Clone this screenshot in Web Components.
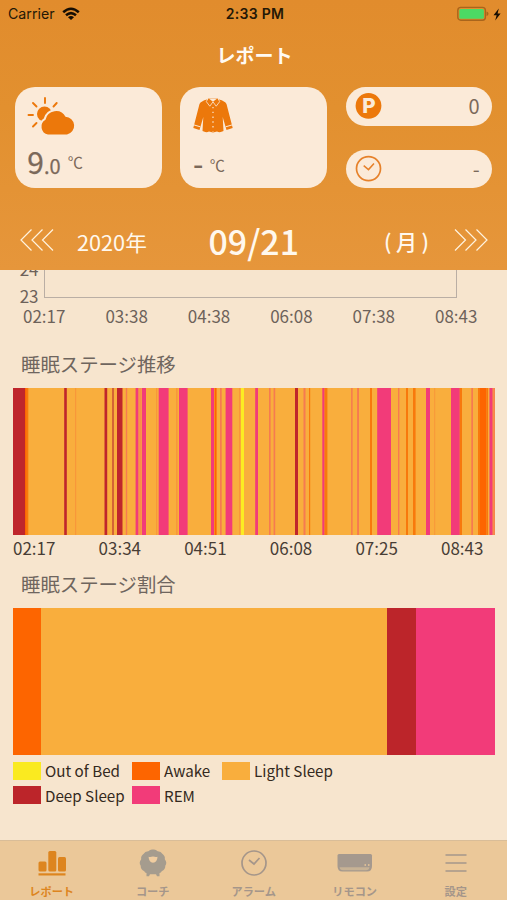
<!DOCTYPE html>
<html lang="ja">
<head>
<meta charset="utf-8">
<title>レポート</title>
<style>
html,body{margin:0;height:100%}
body{font-family:"Noto Sans CJK JP","Noto Sans",sans-serif;background:#f7e5ce;overflow:hidden}
</style>
</head>
<body>
<sleep-app></sleep-app>
<script>
const define = (name, html, after) => customElements.define(name, class extends HTMLElement {
  connectedCallback() {
    if (this.shadowRoot) return;
    const root = this.attachShadow({mode: 'open'});
    const t = document.createElement('template');
    t.innerHTML = html;
    root.append(t.content.cloneNode(true));
    if (after) after(this, root);
  }
});

define('status-bar', `
<style>
:host{display:grid;grid-template-columns:1fr auto 1fr;align-items:center;height:28px;padding:0 6px 0 8px;color:#241806;font:14.2px/28px Inter,sans-serif;box-sizing:border-box}
.l,.r{display:flex;align-items:center;gap:7px}
.r{justify-content:flex-end;gap:4px}
b{font-weight:600;font-size:14px;letter-spacing:.3px;padding-left:1px}
svg{display:block}
</style>
<div class="l"><span>Carrier</span><svg width="18" height="14" viewBox="0 0 18 14" fill="none" stroke="#160e03" stroke-width="2.5"><path d="M1.2 5.2Q9-1.7 16.8 5.2M4 8.3Q9 3.9 14 8.3"/><path d="M9 13L6 10.2Q9 7.8 12 10.2Z" fill="#160e03" stroke="none"/></svg></div>
<b>2:33 PM</b>
<div class="r"><svg width="32" height="16" viewBox="0 0 32 16"><rect x=".8" y="1.4" width="27.6" height="12.8" rx="3" fill="none" stroke="#a9651c" stroke-width="1.4"/><rect x="2.3" y="2.9" width="24.6" height="9.8" rx="1.5" fill="#4cd964"/><path d="M29.5 5.5Q31.5 6 31.5 7.8T29.5 10Z" fill="#a9651c"/></svg><svg width="8" height="13" viewBox="0 0 8 13"><path d="M5.8.5L.5 7.2H3.6L2.2 12.5L7.6 5.6H4.6Z" fill="#160e03"/></svg></div>`);

define('info-card', `
<style>:host{display:flex;flex-direction:column;box-sizing:border-box;border-radius:20px;background:#fbead8;color:#7b695a;padding:9px 12px 0;height:101px}
.v{display:flex;align-items:baseline;height:48px;line-height:48px;margin-top:-1px}</style>
<slot name="icon"></slot><div class="v"><slot></slot></div>`);

define('info-pill', `
<style>:host{display:flex;align-items:center;justify-content:space-between;box-sizing:border-box;height:38.5px;border-radius:20px;background:#fbead8;color:#7b695a;padding:0 12.5px 0 9px;font-size:20px;line-height:38px}
::slotted(svg){display:block}</style>
<slot name="icon"></slot><span><slot></slot></span>`);

define('date-nav', `
<style>
:host{display:grid;grid-template-columns:57px 113px 194px auto 1fr;align-items:center;height:49px;color:#fff8ed;padding:0 19px 0 20px;box-sizing:border-box}
svg{display:block;fill:none;stroke:#fff3df;stroke-width:1.2;margin-bottom:2px}
.y{font-size:21.7px;line-height:49px}
.d{font-size:33.9px;font-weight:500;line-height:50px;padding-left:18.5px}
.w{font-size:21px;font-weight:500;line-height:49px;display:flex;gap:4.5px}
.n{justify-self:end}
</style>
<svg width="34" height="24"><path d="M11.5 1.5L1 12L11.5 22.5M22.5 1.5L12 12L22.5 22.5M33 1.5L22.5 12L33 22.5"/></svg>
<span class="y">2020年</span><span class="d">09/21</span>
<span class="w"><span>(</span><span>月</span><span>)</span></span>
<svg class="n" width="34" height="24"><path d="M1 1.5L11.5 12L1 22.5M11.5 1.5L22 12L11.5 22.5M22.5 1.5L33 12L22.5 22.5"/></svg>`);

define('report-header', `
<style>
:host{display:block;height:270px;flex:none;background:linear-gradient(#e18c2d,#e2902f 40%,#e6963b)}
h1{margin:0;height:59px;font-size:19px;line-height:54px;text-align:center;color:#fffaf2;font-weight:700;padding-left:2px}
.cards{display:grid;grid-template-columns:147px 147px 146.5px;column-gap:18.2px;padding-left:15.3px;height:129px}
.pills{display:flex;flex-direction:column;gap:24px}
.cards svg{display:block}
.big{font-size:30px}.mid{font-size:20px}.u{font-size:15.2px;position:relative;top:-6px;margin-left:7px}
.big,.mid{-webkit-text-stroke:.25px #7b695a}
.cold{font-size:29px;font-weight:500;position:relative;top:1px;left:.5px}.c{top:-3px}
</style>
<status-bar></status-bar>
<h1>レポート</h1>
<div class="cards">
 <info-card><svg slot="icon" width="50" height="42" viewBox="27 95 50 42">
  <circle cx="44.5" cy="113" r="7.5" fill="#ec780b"/>
  <path d="M45 97V102M33 102L36.5 105.5M56.7 102L53.5 105.5M28.5 114H33M33 125.5L36.5 122" stroke="#ec780b" stroke-width="1.9" stroke-linecap="round"/>
  <path d="M48 133.5a8 8 0 0 1-2.5-14.8a10.8 10.8 0 0 1 20-3a9 9 0 0 1 1.5 17.8Z" fill="#ec780b" stroke="#fbead8" stroke-width="4.2" paint-order="stroke"/></svg>
  <span class="big">9</span><span class="mid">.0</span><span class="u">℃</span></info-card>
 <info-card><svg slot="icon" width="46" height="42" viewBox="192 95.6 46 42">
  <path d="M207 99Q201 100.5 199.5 103.5L193.3 127.5L199.5 129.5L203.3 116.5L202.5 130.7Q206 132.5 209 131.2L213 132.2L217 131.2Q220 132.5 223.5 130.7L222.7 116.5L226.5 129.5L232.7 127.5L226.5 103.5Q225 100.5 219 99L213 102Z" fill="#ec780b"/>
  <path d="M208.3 97.6L206.3 101.2L209.8 105.8L213 101.5L216.2 105.8L219.7 101.2L217.7 97.6Z" fill="#ec780b" stroke="#fbead8" stroke-width=".8"/>
  <path d="M208.8 98H217.2L213 101.3Z" fill="#fbead8"/>
  <path d="M193.5 124.4L200.3 126.4M232.5 124.4L225.7 126.4" stroke="#fbead8" stroke-width="1"/>
  <path d="M213 106.5V131" stroke="#fbead8" stroke-width="1.2" stroke-dasharray="1.4 3.4"/></svg>
  <span class="cold">-</span><span class="u c">℃</span></info-card>
 <div class="pills">
  <info-pill><svg slot="icon" width="28" height="28" viewBox="0 0 28 28"><circle cx="13.5" cy="13.8" r="12.9" fill="#ec780b"/><text x="13.9" y="21.2" text-anchor="middle" font-family="Inter,sans-serif" font-weight="800" font-size="20.5" fill="#fbead8">P</text></svg>0</info-pill>
  <info-pill><svg slot="icon" width="28" height="28" viewBox="0 0 28 28" fill="none" stroke="#e6812a"><circle cx="13.5" cy="13.6" r="12" stroke-width="1.7"/><path d="M8.7 10.6L13.5 14.6L19 8.6" stroke-width="1.5"/></svg>-</info-pill>
 </div>
</div>
<date-nav></date-nav>`);

define('axis-labels', `
<style>:host{display:flex;font-size:17px;line-height:24px;height:24px}span{width:var(--step);flex:none}</style>`,
(el, root) => el.getAttribute('values').split(' ').forEach(v => {
  const s = document.createElement('span'); s.textContent = v; root.append(s);
}));

define('line-chart-tail', `
<style>
:host{display:block;height:64px;overflow:hidden;color:#6d625a}
.p{display:flex;height:28px}
.y{width:38.5px;margin-right:5.5px;text-align:right;font-size:17px;line-height:27px;height:54px;margin-top:-15.5px}
.y span{display:block}
.g{width:411px;height:27px;border:1px solid #baaea4;border-top:0}
axis-labels{--step:82.4px;margin:6px 0 0 23px}
</style>
<div class="p"><div class="y"><span>24</span><span>23</span></div><div class="g"></div></div>
<axis-labels values="02:17 03:38 04:38 06:08 07:38 08:43"></axis-labels>`);

/* Each entry: start, end, stage. Uncovered time is light sleep. */
const STAGES = {d:'#bf262c', a:'#fd6500', r:'#f23b79', y:'#fcec22', o:'#f8973a', p:'#f67a50', b:'#d46334', w:'#f8790c'};
const NIGHT = [[13,25,'d'],[25,26.8,'a'],[26.8,28.3,'w'],[64.2,66.8,'d'],[75,76.2,'o'],[104.5,107.2,'d'],[112,114,'b'],[117,122.5,'d'],[125.8,127.2,'p'],
[135.6,138.4,'r'],[139.5,140.6,'p'],[141.8,146,'r'],[156,157.2,'o'],[158.7,168.6,'r'],[176,177.6,'o'],[179,187.6,'r'],[211,214,'r'],[214.5,216.6,'a'],[220,221.7,'p'],[225.6,232.3,'r'],[239,240.2,'o'],[241,244,'y'],
[255.2,258,'r'],[269,270.6,'p'],[273.6,275.2,'p'],[295,298,'d'],[303.5,305.5,'p'],[309,310.2,'w'],[322.3,324.6,'r'],[324.6,327.4,'w'],[351.1,352.6,'p'],[357.1,359,'p'],[370,372,'w'],[377.2,391,'r'],
[398,399.4,'p'],[406,408,'w'],[413,415.6,'w'],[426,430,'r'],[434.2,435.2,'o'],[451,459.8,'r'],[459.8,462,'w'],[471.3,473,'p'],[478,480,'w'],[480,486.5,'a'],[486.5,488,'w'],[489.5,492.6,'r'],[493.4,494.8,'p']];
define('stage-timeline', `
<style>:host{display:block;width:482px;height:147px;margin-left:13px}svg{display:block}</style>
<svg width="482" height="147" viewBox="13 0 482 147"><rect x="13" width="482" height="147" fill="#f9ae3d"/></svg>`,
(el, root) => {
  const svg = root.querySelector('svg');
  for (const [x0, x1, s] of NIGHT) {
    const r = document.createElementNS('http://www.w3.org/2000/svg', 'rect');
    r.setAttribute('x', x0); r.setAttribute('width', x1 - x0);
    r.setAttribute('height', 147); r.setAttribute('fill', STAGES[s]);
    svg.append(r);
  }
});

define('stage-ratio', `
<style>:host{display:flex;width:482px;height:147px;margin-left:13px}i:nth-child(2){width:27.5px;background:#fd6500}i:nth-child(3){flex:1;background:#f9ae3d}i:nth-child(4){width:28.5px;background:#bc252a}i:nth-child(5){width:79.5px;background:#f23b79}</style><i></i><i></i><i></i><i></i>`);

define('legend-item', `
<style>:host{display:flex;align-items:center;gap:4px;font-size:15.2px;line-height:22px;height:24.4px;color:#342920;white-space:nowrap}i{width:28px;height:18px;flex:none;background:var(--c)}span{margin-top:-1.4px}</style><i></i><span><slot></slot></span>`);

define('stage-legend', `
<style>:host{display:grid;grid-template-columns:119px 90px auto;justify-content:start;margin:3.8px 0 0 13px}</style>
<legend-item style="--c:#faea20">Out of Bed</legend-item><legend-item style="--c:#fd6500">Awake</legend-item><legend-item style="--c:#f9ae3d">Light Sleep</legend-item>
<legend-item style="--c:#bc252a">Deep Sleep</legend-item><legend-item style="--c:#f23b79">REM</legend-item>`);

define('tab-item', `
<style>:host{display:flex;flex-direction:column;align-items:center;color:#a5968a;font-size:11.2px;font-weight:700;line-height:18px;padding-top:4px;box-sizing:border-box}
:host([active]){color:#dd851f}::slotted(svg){display:block;height:37px;width:40px}</style><slot name="icon"></slot><span><slot></slot></span>`);

define('tab-bar', `
<style>:host{display:grid;grid-template-columns:repeat(5,101px);height:60px;box-sizing:border-box;border-top:1px solid #d9bd98;background:#ebc899;flex:none;padding-left:1.2px;margin-top:auto}</style>
<tab-item active><svg slot="icon" viewBox="0 0 40 37" fill="currentColor"><rect x="6.5" y="16.5" width="8" height="10" rx="1.5"/><rect x="16.3" y="6" width="8" height="20.5" rx="1.5"/><rect x="26" y="12" width="8" height="14.5" rx="1.5"/><rect x="6.5" y="28.3" width="27" height="2.2"/></svg>レポート</tab-item>
<tab-item><svg slot="icon" viewBox="0 0 40 37" fill="#a59c8e"><circle cx="20" cy="17.5" r="11.6"/><path d="M20 4.6Q23 4.2 24.5 6.2Q28 6 29.3 8.8Q32.4 11 31.8 14.2Q34.5 17.5 32.3 20.8Q32.5 24.5 28.7 26.2Q28.2 28 26.5 28V31.3H24L23 29.3H17L16 31.3H13.5V28Q11.8 28 11.3 26.2Q7.5 24.5 7.7 20.8Q5.5 17.5 8.2 14.2Q7.6 11 10.7 8.8Q12 6 15.5 6.2Q17 4.2 20 4.6Z"/><path d="M15.6 11.7Q17.5 12.2 20 11.4Q22.5 12.2 24.5 11.7Q24.3 17.3 20 17.7Q15.8 17.3 15.6 11.7Z" fill="#f0cda0"/></svg>コーチ</tab-item>
<tab-item><svg slot="icon" viewBox="0 0 40 37" fill="none" stroke="#a5968a" stroke-width="1.7"><circle cx="20" cy="18" r="12"/><path d="M15 15L20 19L25.5 13"/></svg>アラーム</tab-item>
<tab-item><svg slot="icon" viewBox="0 0 40 37"><path d="M2.5 10.5Q2.5 9 4 9H35.5Q37 9 37 10.5V21Q37 26.5 32 26.5H7.5Q2.5 26.5 2.5 21Z" fill="#a5998e"/><path d="M4.5 22.2H34.5Q34 25.2 31 25.2H8Q5 25.2 4.5 22.2Z" fill="#c7b295"/><path d="M29.5 20H31M33 20H34.5" stroke="#ebc899" stroke-width="1.5"/></svg>リモコン</tab-item>
<tab-item><svg slot="icon" viewBox="0 0 40 37" stroke="#a5968a" stroke-width="1.5"><path d="M9.5 10H30.5M9.5 18H30.5M9.5 26H30.5"/></svg>設定</tab-item>`);

define('sleep-app', `
<style>
:host{display:flex;flex-direction:column;width:507px;height:900px;background:#f7e5ce;overflow:hidden}
h2{margin:0 0 0 21px;color:#6f655e;font-size:19.4px;font-weight:400;line-height:30px;height:30px}
.t1{margin-top:15px;margin-bottom:9px}
.t2{margin-top:9px;margin-bottom:9px}
.ax{--step:85.6px;margin:1px 0 0 13px;color:#483d35}
</style>
<report-header></report-header>
<line-chart-tail></line-chart-tail>
<h2 class="t1">睡眠ステージ推移</h2>
<stage-timeline></stage-timeline>
<axis-labels class="ax" values="02:17 03:34 04:51 06:08 07:25 08:43"></axis-labels>
<h2 class="t2">睡眠ステージ割合</h2>
<stage-ratio></stage-ratio>
<stage-legend></stage-legend>
<tab-bar></tab-bar>`);
</script>
</body>
</html>
